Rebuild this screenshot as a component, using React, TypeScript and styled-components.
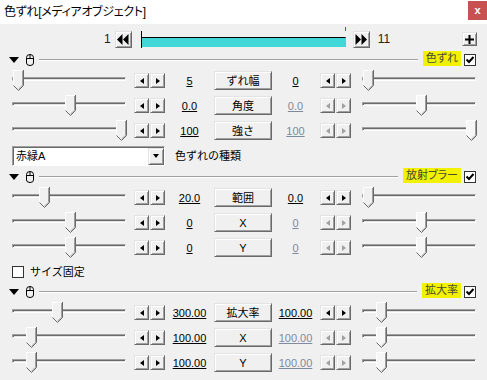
import styled, { createGlobalStyle } from "styled-components";

const GlobalStyle = createGlobalStyle`
  html, body {
    margin: 0;
    padding: 0;
    background: #f0f0f0;
  }
  body {
    font-family: "Liberation Sans", "Noto Sans CJK JP", sans-serif;
    font-size: 11px;
    color: #000;
  }
`;

const Window = styled.div`
  width: 487px;
  height: 380px;
  background: #f0f0f0;
  overflow: hidden;
  display: flex;
  flex-direction: column;
`;

const TitleBar = styled.div`
  height: 24px;
  flex: none;
  background: #fff;
  display: flex;
  align-items: center;
  padding-left: 4px;
  font-size: 12px;
  line-height: 16px;
  font-feature-settings: "palt";
  letter-spacing: -0.3px;
`;

const CloseButton = styled.div`
  margin-left: auto;
  align-self: flex-start;
  margin-top: 1px;
  width: 19px;
  height: 19px;
  background: #c75050;
  color: #fff;
  display: flex;
  align-items: center;
  justify-content: center;
  font-size: 11px;
  font-weight: bold;
  line-height: 1;
`;

const Timeline = styled.div`
  height: 28px;
  flex: none;
  box-sizing: border-box;
  display: flex;
  align-items: flex-start;
  padding: 7px 10px 0 104px;
`;

const FrameNum = styled.span<{ $ml?: number }>`
  font-size: 12px;
  line-height: 17px;
  margin-left: ${(p) => p.$ml ?? 0}px;
  color: #222;
`;

const Raised = styled.div`
  box-sizing: border-box;
  background: #f0f0f0;
  border: 1px solid;
  border-color: #e3e3e3 #696969 #696969 #e3e3e3;
  box-shadow: inset 1px 1px #fff, inset -1px -1px #a0a0a0;
  display: flex;
  align-items: center;
  justify-content: center;
`;

const JumpButton = styled(Raised)<{ $ml: number }>`
  width: 17px;
  height: 17px;
  margin-left: ${(p) => p.$ml}px;
`;

const PlusButton = styled(Raised)`
  width: 15px;
  height: 14px;
  margin-left: auto;
  margin-top: 1px;
`;

const Bar = styled.div`
  position: relative;
  width: 205px;
  height: 17px;
  margin-left: 9px;
  box-sizing: border-box;
  border-left: 1px solid #000;
`;

const BarFill = styled.div`
  margin-top: 6px;
  height: 9px;
  border-top: 1px solid #000;
  border-right: 1px solid #41d7d7;
  background: #41d7d7;
`;

const BarMarker = styled.div`
  position: absolute;
  right: 0;
  top: -4px;
  width: 1px;
  height: 4px;
  background: #e02020;
`;

const SectionHeader = styled.div`
  height: 16px;
  flex: none;
  display: flex;
  align-items: center;
  padding: 0 11px 0 9px;
`;

const Collapse = styled.div`
  width: 0;
  height: 0;
  border-left: 5px solid transparent;
  border-right: 5px solid transparent;
  border-top: 6px solid #000;
`;

const Rule = styled.div`
  flex: 1;
  height: 0;
  border-top: 1px solid #a0a0a0;
  border-bottom: 1px solid #fff;
  margin: 0 5px 0 4px;
`;

const FilterName = styled.span`
  background: #f2f200;
  color: #4a4a30;
  font-size: 11px;
  line-height: 15px;
  padding: 0 3px;
  margin-top: -3px;
  font-feature-settings: "palt";
`;

const CheckBoxBox = styled.div<{ $ml?: number }>`
  width: 12px;
  height: 12px;
  box-sizing: border-box;
  border: 1px solid #333;
  background: #fff;
  margin-left: ${(p) => p.$ml ?? 0}px;
  display: flex;
  align-items: center;
  justify-content: center;
  flex: none;
`;

const Row = styled.div`
  height: 25px;
  flex: none;
  display: flex;
  align-items: center;
  padding-left: 12px;
`;

const SliderBox = styled.div<{ $ml?: number }>`
  position: relative;
  width: 114px;
  height: 22px;
  margin-left: ${(p) => p.$ml ?? 0}px;
  flex: none;
`;

const Track = styled.div`
  position: absolute;
  left: 0;
  right: 0;
  top: 7px;
  height: 4px;
  box-sizing: border-box;
  border: 1px solid;
  border-color: #a0a0a0 #fff #fff #a0a0a0;
  background: #e3e3e3;
  box-shadow: inset 1px 1px #696969;
`;

const ThumbHolder = styled.div<{ $at: number }>`
  position: absolute;
  top: 0;
  left: ${(p) => p.$at}px;
  width: 11px;
  height: 22px;
`;

const ArrowPair = styled.div<{ $ml: number }>`
  display: flex;
  gap: 1px;
  margin-left: ${(p) => p.$ml}px;
  flex: none;
`;

const ArrowButton = styled(Raised)`
  width: 15px;
  height: 15px;
`;

const Tri = styled.div<{ $dir: "left" | "right"; $off?: boolean }>`
  width: 0;
  height: 0;
  border-top: 3.5px solid transparent;
  border-bottom: 3.5px solid transparent;
  ${(p) =>
    p.$dir === "left"
      ? `border-right: 4px solid ${p.$off ? "#a0a0a0" : "#000"};`
      : `border-left: 4px solid ${p.$off ? "#a0a0a0" : "#000"};`}
`;

const Value = styled.span<{ $w: number; $off?: boolean }>`
  width: ${(p) => p.$w}px;
  text-align: center;
  text-decoration: underline;
  font-size: 11px;
  line-height: 14px;
  color: ${(p) => (p.$off ? "#7d8aa0" : "#000")};
  flex: none;
`;

const ParamButton = styled(Raised)`
  width: 58px;
  height: 19px;
  font-size: 11px;
  line-height: 14px;
  flex: none;
`;

const DropRow = styled.div`
  height: 26px;
  flex: none;
  display: flex;
  align-items: center;
  padding-left: 12px;
`;

const Select = styled.div`
  width: 153px;
  height: 20px;
  box-sizing: border-box;
  border: 1px solid;
  border-color: #a0a0a0 #fff #fff #a0a0a0;
  box-shadow: inset 1px 1px #696969;
  background: #fff;
  display: flex;
  align-items: center;
  padding-left: 3px;
  font-size: 11px;
  line-height: 14px;
`;

const SelectButton = styled(Raised)`
  margin-left: auto;
  width: 16px;
  height: 17px;
`;

const DownTri = styled.div`
  width: 0;
  height: 0;
  border-left: 3.5px solid transparent;
  border-right: 3.5px solid transparent;
  border-top: 4px solid #000;
`;

const Caption = styled.span<{ $ml: number }>`
  margin-left: ${(p) => p.$ml}px;
  font-size: 11px;
  line-height: 14px;
`;

const CheckRow = styled.div`
  height: 24px;
  flex: none;
  display: flex;
  align-items: center;
  padding-left: 12px;
`;

function MouseIcon() {
  return (
    <svg width="10" height="14" viewBox="0 0 10 14" style={{ marginLeft: 6 }}>
      <path
        d="M1.5 4.5 Q1.5 1.5 5 1.5 Q8.5 1.5 8.5 4.5 V10 Q8.5 12.5 5 12.5 Q1.5 12.5 1.5 10 Z M1.5 5.5 H8.5 M5 1.5 V5.5"
        fill="none"
        stroke="#000"
      />
    </svg>
  );
}

function Check({ on, ml }: { on: boolean; ml?: number }) {
  return (
    <CheckBoxBox $ml={ml}>
      {on && (
        <svg width="10" height="10" viewBox="0 0 10 10">
          <path d="M1.5 4.5 L4 7 L8.5 2" fill="none" stroke="#000" strokeWidth="2" />
        </svg>
      )}
    </CheckBoxBox>
  );
}

function Thumb({ off }: { off?: boolean }) {
  return (
    <svg width="11" height="22" viewBox="0 0 11 22">
      <path d="M0.5 0.5 H10.5 V15.5 L5.5 20.5 L0.5 15.5 Z" fill={off ? "#f7f7f7" : "#f0f0f0"} />
      <path d="M0.5 15.5 V0.5 H10" fill="none" stroke="#fff" />
      <path d="M9.5 1 V15.2 L5.5 19.2" fill="none" stroke="#a0a0a0" />
      <path d="M10.5 0 V15.5 L5.5 20.5 L0.5 15.5" fill="none" stroke="#696969" />
    </svg>
  );
}

function Slider({ at, off, ml }: { at: number; off?: boolean; ml?: number }) {
  return (
    <SliderBox $ml={ml}>
      <Track />
      <ThumbHolder $at={at}>
        <Thumb off={off} />
      </ThumbHolder>
    </SliderBox>
  );
}

function Arrows({ off, ml }: { off?: boolean; ml: number }) {
  return (
    <ArrowPair $ml={ml}>
      <ArrowButton>
        <Tri $dir="left" $off={off} />
      </ArrowButton>
      <ArrowButton>
        <Tri $dir="right" $off={off} />
      </ArrowButton>
    </ArrowPair>
  );
}

type Param = {
  left: number;
  value: string;
  label: string;
  rvalue: string;
  right: number;
  rOff: boolean;
};

function ParamRow({ p }: { p: Param }) {
  return (
    <Row>
      <Slider at={p.left} />
      <Arrows ml={8} />
      <Value $w={49}>{p.value}</Value>
      <ParamButton>{p.label}</ParamButton>
      <Value $w={47} $off={p.rOff}>
        {p.rvalue}
      </Value>
      <Arrows ml={1} off={p.rOff} />
      <Slider at={p.right} off={p.rOff} ml={11} />
    </Row>
  );
}

function Header({ name }: { name: string }) {
  return (
    <SectionHeader>
      <Collapse />
      <MouseIcon />
      <Rule />
      <FilterName>{name}</FilterName>
      <Check on ml={3} />
    </SectionHeader>
  );
}

const shift: Param[] = [
  { left: 1, value: "5", label: "ずれ幅", rvalue: "0", right: 1, rOff: false },
  { left: 53, value: "0.0", label: "角度", rvalue: "0.0", right: 54, rOff: true },
  { left: 104, value: "100", label: "強さ", rvalue: "100", right: 104, rOff: true },
];

const radial: Param[] = [
  { left: 27, value: "20.0", label: "範囲", rvalue: "0.0", right: 1, rOff: false },
  { left: 53, value: "0", label: "X", rvalue: "0", right: 54, rOff: true },
  { left: 53, value: "0", label: "Y", rvalue: "0", right: 54, rOff: true },
];

const zoom: Param[] = [
  { left: 40, value: "300.00", label: "拡大率", rvalue: "100.00", right: 14, rOff: false },
  { left: 14, value: "100.00", label: "X", rvalue: "100.00", right: 14, rOff: true },
  { left: 14, value: "100.00", label: "Y", rvalue: "100.00", right: 14, rOff: true },
];

export default function App() {
  return (
    <Window>
      <GlobalStyle />
      <TitleBar>
        色ずれ[メディアオブジェクト]
        <CloseButton>x</CloseButton>
      </TitleBar>
      <Timeline>
        <FrameNum>1</FrameNum>
        <JumpButton $ml={4}>
          <svg width="12" height="11" viewBox="0 0 12 11">
            <path d="M5.5 0 V11 L0 5.5 Z M11.5 0 V11 L6 5.5 Z" fill="#000" />
          </svg>
        </JumpButton>
        <Bar>
          <BarFill />
          <BarMarker />
        </Bar>
        <JumpButton $ml={7}>
          <svg width="12" height="11" viewBox="0 0 12 11">
            <path d="M0.5 0 V11 L6 5.5 Z M6.5 0 V11 L12 5.5 Z" fill="#000" />
          </svg>
        </JumpButton>
        <FrameNum $ml={8}>11</FrameNum>
        <PlusButton>
          <svg width="9" height="9" viewBox="0 0 9 9">
            <path d="M4.5 0 V9 M0 4.5 H9" stroke="#000" strokeWidth="2" />
          </svg>
        </PlusButton>
      </Timeline>

      <Header name="色ずれ" />
      {shift.map((p) => (
        <ParamRow key={p.label} p={p} />
      ))}
      <DropRow>
        <Select>
          赤緑A
          <SelectButton>
            <DownTri />
          </SelectButton>
        </Select>
        <Caption $ml={10}>色ずれの種類</Caption>
      </DropRow>

      <Header name="放射ブラー" />
      {radial.map((p) => (
        <ParamRow key={p.label} p={p} />
      ))}
      <CheckRow>
        <Check on={false} />
        <Caption $ml={6}>サイズ固定</Caption>
      </CheckRow>

      <Header name="拡大率" />
      {zoom.map((p) => (
        <ParamRow key={p.label} p={p} />
      ))}
    </Window>
  );
}
